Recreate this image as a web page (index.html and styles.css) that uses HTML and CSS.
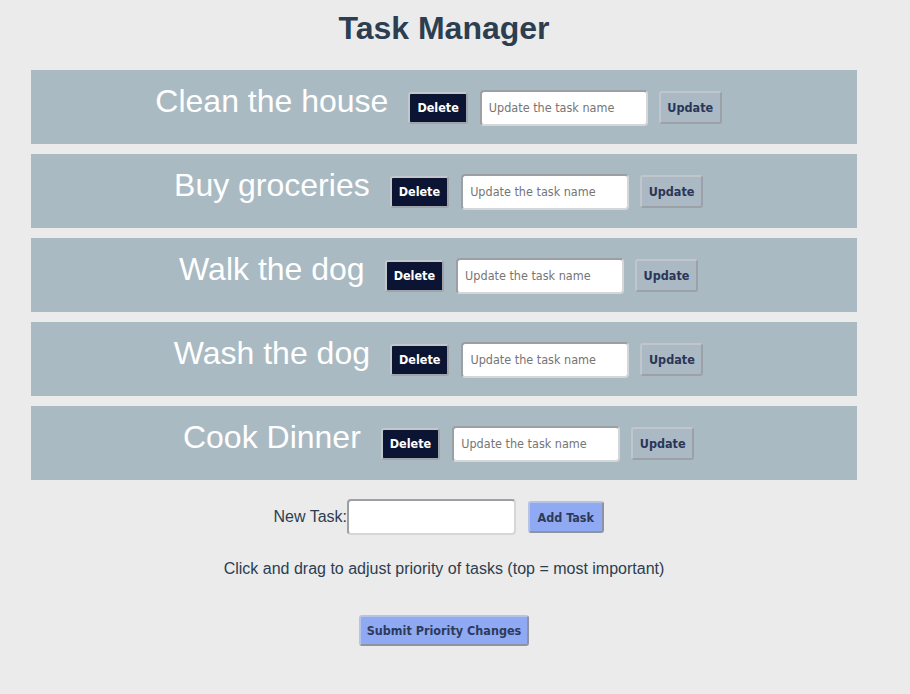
FILE: index.html
```html
<!DOCTYPE html>
<html>
<head>
<meta charset="utf-8">
<title>Task Manager</title>
<link rel="stylesheet" href="styles.css">
</head>
<body>
<div class="page">
  <h1 class="title">Task Manager</h1>
  <ul class="tasks">
    <li class="task">
      <span class="task-name">Clean the house</span>
      <button class="btn btn-delete">Delete</button>
      <input class="field field-update" type="text" placeholder="Update the task name">
      <button class="btn btn-update">Update</button>
    </li>
    <li class="task">
      <span class="task-name">Buy groceries</span>
      <button class="btn btn-delete">Delete</button>
      <input class="field field-update" type="text" placeholder="Update the task name">
      <button class="btn btn-update">Update</button>
    </li>
    <li class="task">
      <span class="task-name">Walk the dog</span>
      <button class="btn btn-delete">Delete</button>
      <input class="field field-update" type="text" placeholder="Update the task name">
      <button class="btn btn-update">Update</button>
    </li>
    <li class="task">
      <span class="task-name">Wash the dog</span>
      <button class="btn btn-delete">Delete</button>
      <input class="field field-update" type="text" placeholder="Update the task name">
      <button class="btn btn-update">Update</button>
    </li>
    <li class="task">
      <span class="task-name">Cook Dinner</span>
      <button class="btn btn-delete">Delete</button>
      <input class="field field-update" type="text" placeholder="Update the task name">
      <button class="btn btn-update">Update</button>
    </li>
  </ul>
  <div class="new-task">
    <label class="new-label">New Task:</label>
    <input class="field field-new" type="text">
    <button class="btn btn-blue btn-add">Add Task</button>
  </div>
  <p class="hint">Click and drag to adjust priority of tasks (top = most important)</p>
  <div class="submit-row">
    <button class="btn btn-blue btn-submit">Submit Priority Changes</button>
  </div>
</div>
</body>
</html>
```

FILE: styles.css
```css
html, body {
  margin: 0;
  padding: 0;
  background: #ebebeb;
}

body {
  font-family: "Liberation Sans", Arial, sans-serif;
  color: #2c3e50;
}

.page {
  width: 826px;
  margin-left: 31px;
  padding-top: 10px;
}

.title {
  margin: 0;
  font-size: 32px;
  line-height: 37px;
  font-weight: bold;
  text-align: center;
  color: #2c3e50;
}

.tasks {
  list-style: none;
  margin: 23px 0 0 0;
  padding: 0;
  display: flex;
  flex-direction: column;
  gap: 10px;
}

.task {
  height: 74px;
  box-sizing: border-box;
  padding-top: 13px;
  background: #aabac3;
  display: flex;
  justify-content: center;
  align-items: baseline;
}

.task-name {
  font-size: 32px;
  line-height: 36px;
  color: #ffffff;
  margin-right: 20px;
}

.btn {
  font-family: "DejaVu Sans Condensed", "DejaVu Sans", sans-serif;
  font-stretch: condensed;
  font-weight: bold;
  font-size: 12.5px;
  line-height: 15px;
  border-radius: 3px;
  border: 2px solid #a4a9ae;
  border-top-color: #c4c8cc;
  border-left-color: #c4c8cc;
  cursor: pointer;
}

.btn-delete {
  background: #0b1432;
  color: #ffffff;
  border-color: #c2c7cc;
  border-right-color: #9ea4aa;
  border-bottom-color: #9ea4aa;
  padding: 6px 7px 7px;
  margin-right: 12px;
}

.btn-update {
  background: #aab9c3;
  color: #2a3558;
  border-color: #c0c6cb #9ba1a7 #9ba1a7 #c0c6cb;
  padding: 7px 6.5px 7px;
  margin-right: 11px;
}

.field {
  font-family: "DejaVu Sans Condensed", "DejaVu Sans", sans-serif;
  font-stretch: condensed;
  font-size: 12.5px;
  box-sizing: border-box;
  height: 36px;
  background: #ffffff;
  border: 2px solid #d4d6d8;
  border-top-color: #9c9fa3;
  border-left-color: #9c9fa3;
  border-radius: 4px;
  padding: 0 7px;
  color: #333333;
}

.field::placeholder {
  color: #757575;
}

.field-update {
  width: 168px;
  margin-right: 11px;
}

.new-task {
  margin-top: 19px;
  display: flex;
  justify-content: center;
  align-items: center;
}

.new-label {
  font-size: 16px;
  color: #2c3e50;
}

.field-new {
  width: 169px;
  margin-right: 12px;
}

.btn-blue {
  background: #8faaf2;
  color: #2c3a5c;
  border-color: #b4c3e6 #8d93a0 #8d93a0 #b4c3e6;
}

.btn-add {
  padding: 7px 7.5px 6px;
  margin-right: 11px;
}

.hint {
  margin: 25px 0 0 0;
  font-size: 16px;
  line-height: 18px;
  text-align: center;
  color: #2c3e50;
}

.submit-row {
  margin-top: 37px;
  display: flex;
  justify-content: center;
}

.btn-submit {
  padding: 6px 6px 6px;
}
```
